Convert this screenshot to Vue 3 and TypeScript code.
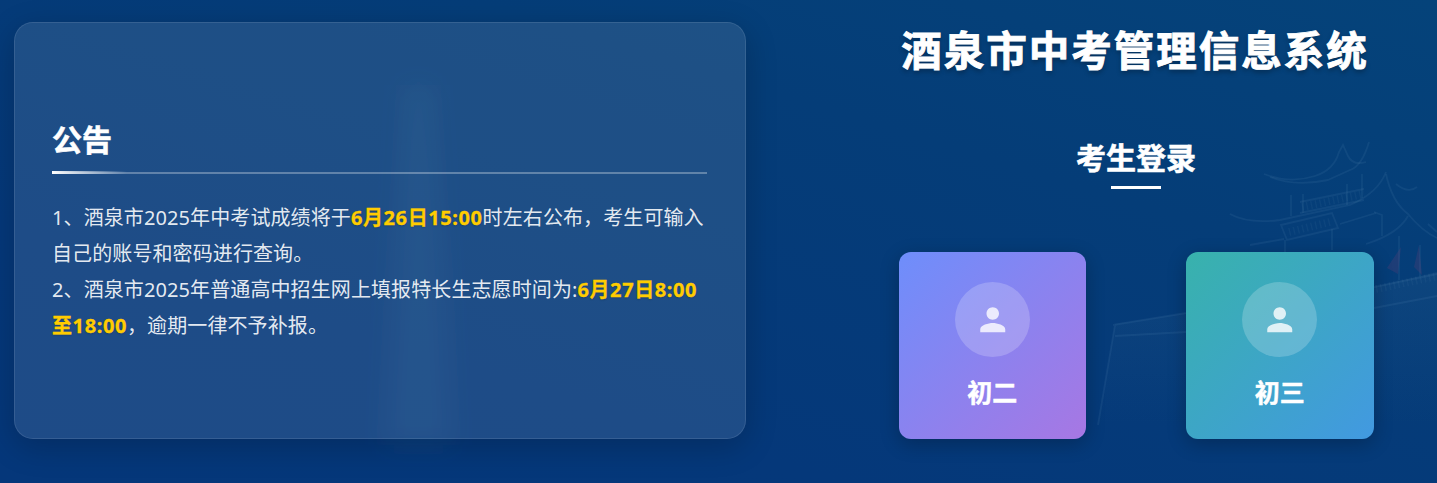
<template>
  <div class="login-page">
    <svg class="scenery" viewBox="0 0 1437 483" aria-hidden="true">
      <defs>
        <linearGradient id="wall" x1="0" y1="0" x2="0" y2="1">
          <stop offset="0" stop-color="#5d8fb0" stop-opacity="0.1" />
          <stop offset="1" stop-color="#5d8fb0" stop-opacity="0" />
        </linearGradient>
        <filter id="soft" x="-100%" y="-20%" width="300%" height="140%">
          <feGaussianBlur stdDeviation="13" />
        </filter>
        <filter id="slight">
          <feGaussianBlur stdDeviation="0.5" />
        </filter>
      </defs>
      <path class="tower" d="M405 85 L432 85 L444 270 L452 445 L385 445 L394 270Z" filter="url(#soft)" />
      <path d="M1115 324 L1186 313 L1374 287 L1437 272 V425 H1098Z" fill="url(#wall)" />
      <g class="outline" filter="url(#slight)">
        <path d="M1264 174 Q1290 184 1315 176 Q1334 170 1339 152 L1343 145 L1348 156 Q1353 166 1366 162" />
        <path d="M1270 177 Q1295 187 1328 180 L1350 170 Q1362 166 1369 142" />
        <path d="M1291 195 V216 M1303 194 V213 M1347 184 V205 M1362 174 V198" />
        <path d="M1300 202 L1364 189 M1300 213 L1364 200" />
        <path d="M1230 214 Q1248 224 1280 220 L1350 205 Q1378 193 1386 172" />
        <path d="M1281 225 L1332 213 L1338 228 L1287 240Z" />
        <path d="M1250 245 L1284 239 M1340 224 L1376 213 M1285 240 V252 M1332 229 V250" />
        <path d="M1386 174 Q1392 202 1408 214 Q1422 231 1437 238" />
        <path d="M1408 216 Q1398 234 1366 244" />
        <path d="M1396 184 Q1408 194 1417 187 M1428 224 L1437 232" />
        <path d="M1374 212 L1382 215 V236 M1399 236 V280 M1420 245 V276" />
        <path d="M1113 325 L1186 313 M1115 336 L1186 332 M1115 325 L1098 425" />
        <path d="M1374 287 L1437 274 M1374 308 L1437 296" />
      </g>
      <g class="railing" filter="url(#slight)">
        <path d="M1302 207 L1364 194" />
        <path d="M1289 232 L1330 222" />
        <path d="M1376 289 L1437 276" />
      </g>
      <path class="flag" d="M1401 247 L1387 268 L1398 274Z M1419 245 L1414 267 L1422 275Z" />
    </svg>

    <section class="notice">
      <h2 class="notice-title">公告</h2>
      <div class="notice-body">
        <p v-for="(line, i) in noticeLines" :key="i">
          <span v-for="(part, j) in line" :key="j" :class="part.kind">{{ part.text }}</span>
        </p>
      </div>
    </section>

    <main class="panel">
      <h1 class="system-name">酒泉市中考管理信息系统</h1>
      <h2 class="login-title">考生登录</h2>
      <div class="grades">
        <a v-for="grade in grades" :key="grade.name" class="grade" :class="grade.theme">
          <span class="avatar">
            <svg viewBox="0 0 24 24" fill="currentColor">
              <path d="M12 12c2.21 0 4-1.79 4-4s-1.79-4-4-4-4 1.79-4 4 1.79 4 4 4zm0 2c-2.67 0-8 1.34-8 4v2h16v-2c0-2.66-5.33-4-8-4z" />
            </svg>
          </span>
          <span class="grade-name">{{ grade.name }}</span>
        </a>
      </div>
    </main>
  </div>
</template>

<script setup lang="ts">
interface Part {
  text: string
  kind?: 'highlight'
}

const noticeLines: Part[][] = [
  [
    { text: '1、酒泉市2025年中考试成绩将于' },
    { text: '6月26日15:00', kind: 'highlight' },
    { text: '时左右公布，考生可输入' },
  ],
  [{ text: '自己的账号和密码进行查询。' }],
  [
    { text: '2、酒泉市2025年普通高中招生网上填报特长生志愿时间为:' },
    { text: '6月27日8:00', kind: 'highlight' },
  ],
  [
    { text: '至18:00', kind: 'highlight' },
    { text: '，逾期一律不予补报。' },
  ],
]

const grades = [
  { name: '初二', theme: 'violet' },
  { name: '初三', theme: 'teal' },
]
</script>

<style>
body {
  margin: 0;
  overflow: hidden;
}
</style>

<style scoped>
.login-page {
  position: relative;
  display: flex;
  justify-content: space-between;
  box-sizing: border-box;
  width: 100%;
  height: 483px;
  padding: 22px 0 0 14px;
  overflow: hidden;
  color: #fff;
  font-family: 'Noto Sans', 'Noto Sans CJK SC', sans-serif;
  background: linear-gradient(197deg, #05437a 0%, #053d78 32%, #05387a 72%, #05377a 100%);
}

.scenery {
  position: absolute;
  inset: 0;
  width: 1437px;
  height: 483px;
}

.tower {
  fill: #4d88b4;
  fill-opacity: 0.1;
}

.outline {
  fill: none;
  stroke: #6d9bbb;
  stroke-width: 1.8;
  stroke-opacity: 0.11;
}

.railing {
  fill: none;
  stroke: #6d9bbb;
  stroke-width: 8;
  stroke-dasharray: 1.5 3;
  stroke-opacity: 0.07;
}

.flag {
  fill: #7d3f78;
  fill-opacity: 0.22;
}

.notice {
  position: relative;
  display: flex;
  flex-direction: column;
  justify-content: center;
  box-sizing: border-box;
  width: 732px;
  height: 417px;
  padding: 0 38px 0 37px;
  border: 1px solid rgba(255, 255, 255, 0.1);
  border-radius: 19px;
  background: rgba(255, 255, 255, 0.1);
  box-shadow: 0 8px 32px rgba(0, 0, 0, 0.2);
}

.notice-title {
  position: relative;
  margin: 0 0 26px;
  padding-bottom: 10px;
  border-bottom: 2px solid rgba(255, 255, 255, 0.3);
  font-size: 30px;
  line-height: 45px;
  font-weight: 700;
  -webkit-text-stroke: 0.6px #fff;
}

.notice-title::after {
  content: '';
  position: absolute;
  left: 0;
  bottom: -2px;
  width: 75px;
  height: 3px;
  background: linear-gradient(90deg, #fff, transparent);
}

.notice-body {
  font-size: 20px;
  line-height: 36px;
  letter-spacing: 0.1px;
  color: rgba(255, 255, 255, 0.9);
  white-space: nowrap;
}

.notice-body p {
  margin: 0;
}

.highlight {
  color: #ffcc00;
  font-weight: 700;
  letter-spacing: 0.6px;
  -webkit-text-stroke: 0.3px #ffcc00;
  text-shadow: 0 1px 2px rgba(0, 0, 0, 0.2);
}

.panel {
  position: relative;
  display: flex;
  flex-direction: column;
  align-items: center;
  width: 601.8px;
}

.system-name {
  margin: 1px 2px 0 0;
  font-size: 40.5px;
  line-height: 56px;
  letter-spacing: 2px;
  font-weight: 700;
  -webkit-text-stroke: 0.9px #fff;
  text-shadow: 0 3px 5px rgba(0, 0, 0, 0.3);
}

.login-title {
  position: relative;
  margin: 56px 0 0;
  padding-bottom: 9px;
  font-size: 30px;
  line-height: 45px;
  font-weight: 700;
  -webkit-text-stroke: 0.6px #fff;
}

.login-title::after {
  content: '';
  position: absolute;
  left: 50%;
  bottom: 0;
  width: 50px;
  height: 3px;
  margin-left: -25px;
  background: #fff;
}

.grades {
  display: flex;
  gap: 100px;
  margin-top: 63px;
}

.grade {
  display: flex;
  flex-direction: column;
  align-items: center;
  box-sizing: border-box;
  width: 187.5px;
  height: 187px;
  padding-top: 30px;
  border-radius: 12px;
  box-shadow: 0 5px 19px rgba(0, 0, 0, 0.24);
}

.violet {
  background: linear-gradient(135deg, #6e8efb, #a777e3);
}

.teal {
  background: linear-gradient(135deg, #38b2ac, #4299e1);
}

.avatar {
  display: flex;
  align-items: center;
  justify-content: center;
  width: 75px;
  height: 75px;
  border-radius: 50%;
  color: rgba(255, 255, 255, 0.8);
  background: rgba(255, 255, 255, 0.2);
}

.avatar svg {
  width: 37.5px;
  height: 37.5px;
}

.grade-name {
  margin-top: 16px;
  font-size: 25px;
  line-height: 38px;
  font-weight: 700;
  -webkit-text-stroke: 0.5px #fff;
}
</style>
